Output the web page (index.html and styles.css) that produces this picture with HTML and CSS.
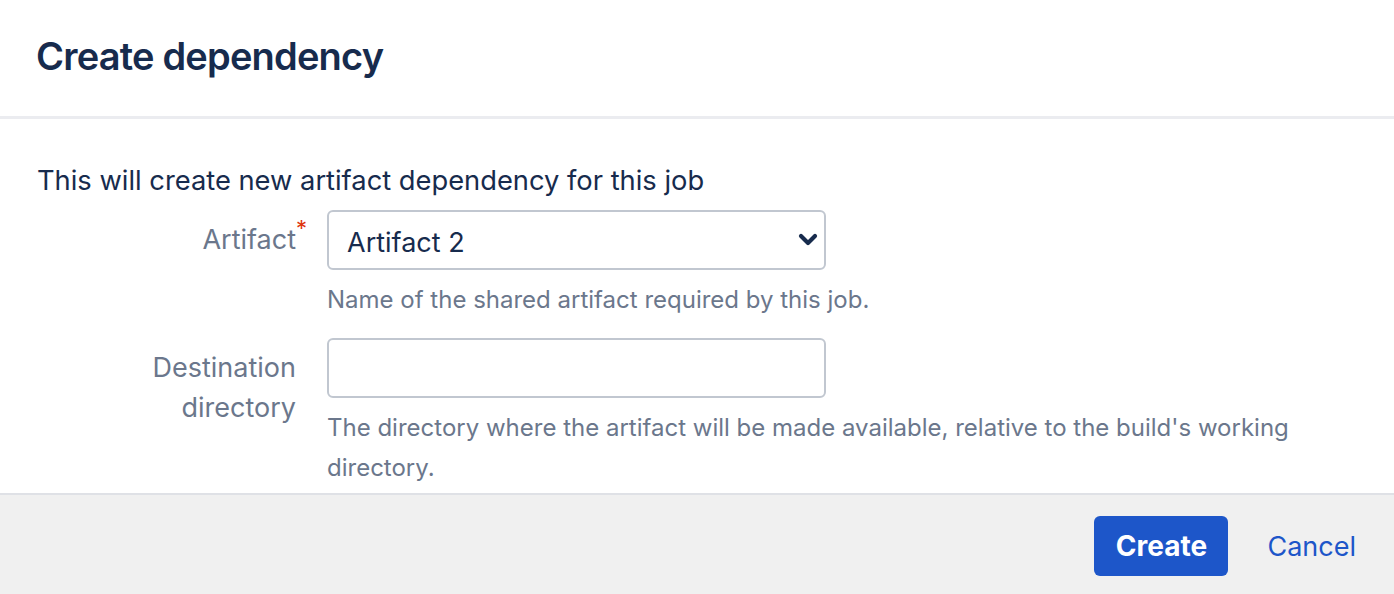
FILE: index.html
```html
<!DOCTYPE html>
<html lang="en">
<head>
<meta charset="utf-8">
<title>Create dependency</title>
<link rel="stylesheet" href="styles.css">
</head>
<body>
<div class="dialog">
  <header class="dialog-header">
    <h1 class="dialog-title">Create dependency</h1>
  </header>
  <div class="dialog-body">
    <p class="intro">This will create new artifact dependency for this job</p>
    <div class="field-group">
      <label class="field-label">Artifact<span class="required">*</span></label>
      <div class="field">
        <div class="select">
          <span class="select-value">Artifact 2</span>
          <svg class="chevron" width="20" height="14" viewBox="0 0 20 14"><polyline points="3,3 10,10 17,3" fill="none" stroke="#172b4d" stroke-width="4.2" stroke-linecap="round" stroke-linejoin="round"/></svg>
        </div>
        <div class="description">Name of the shared artifact required by this job.</div>
      </div>
    </div>
    <div class="field-group">
      <label class="field-label">Destination<br>directory</label>
      <div class="field">
        <div class="text-input"></div>
        <div class="description">The directory where the artifact will be made available, relative to the build's working directory.</div>
      </div>
    </div>
  </div>
  <footer class="dialog-footer">
    <button class="btn-primary">Create</button>
    <button class="btn-link">Cancel</button>
  </footer>
</div>
</body>
</html>
```

FILE: styles.css
```css
* { box-sizing: border-box; }
html, body { margin: 0; padding: 0; }
body {
  width: 1394px;
  height: 594px;
  overflow: hidden;
  background: #ffffff;
  font-family: Inter, "Liberation Sans", sans-serif;
  color: #172b4d;
}
.dialog {
  display: flex;
  flex-direction: column;
  height: 594px;
}
.dialog-header {
  flex: none;
  height: 119px;
  border-bottom: 3px solid #ebecf0;
  padding: 0 38px 0 36px;
  display: flex;
  align-items: center;
}
.dialog-title {
  margin: 0;
  margin-top: -4px;
  font-size: 38px;
  font-weight: 600;
  letter-spacing: -0.8px;
  color: #172b4d;
}
.dialog-body {
  flex: 1;
  min-height: 0;
  padding: 42px 38px 0 37px;
}
.intro {
  margin: 0 0 9px;
  font-size: 27.3px;
  line-height: 40px;
}
.field-group {
  display: flex;
  margin-bottom: 18px;
}
.field-label {
  width: 259px;
  flex: none;
  text-align: right;
  padding-top: 10px;
  font-size: 27px;
  line-height: 40px;
  color: #6b778c;
  position: relative;
}
.required {
  position: absolute;
  right: -11px;
  top: 7px;
  font-size: 22px;
  line-height: 22px;
  color: #de350b;
}
.field {
  margin-left: 31px;
  flex: 1;
}
.select, .text-input {
  width: 499px;
  height: 60px;
  border: 2px solid #c1c7d0;
  border-radius: 6px;
  background: #ffffff;
}
.select {
  display: flex;
  align-items: center;
  justify-content: space-between;
  padding: 0 6px 0 18px;
}
.select-value {
  font-size: 27px;
  color: #172b4d;
  padding-top: 5px;
}
.chevron { display: block; }
.description {
  margin-top: 10px;
  font-size: 24px;
  line-height: 40px;
  color: #6b778c;
}
.dialog-footer {
  flex: none;
  height: 101px;
  border-top: 2px solid #dfe1e6;
  background: #f0f0f0;
  display: flex;
  justify-content: flex-end;
  align-items: flex-start;
  padding: 21px 38px 0 0;
}
.btn-primary {
  height: 60px;
  width: 134px;
  border: none;
  border-radius: 6px;
  background: #1d56c9;
  color: #ffffff;
  font-family: Inter, "Liberation Sans", sans-serif;
  font-size: 28px;
  font-weight: 700;
  padding: 0;
}
.btn-link {
  height: 60px;
  margin-left: 39px;
  border: none;
  background: none;
  padding: 0;
  color: #1d56c9;
  font-family: Inter, "Liberation Sans", sans-serif;
  font-size: 27px;
}
```
